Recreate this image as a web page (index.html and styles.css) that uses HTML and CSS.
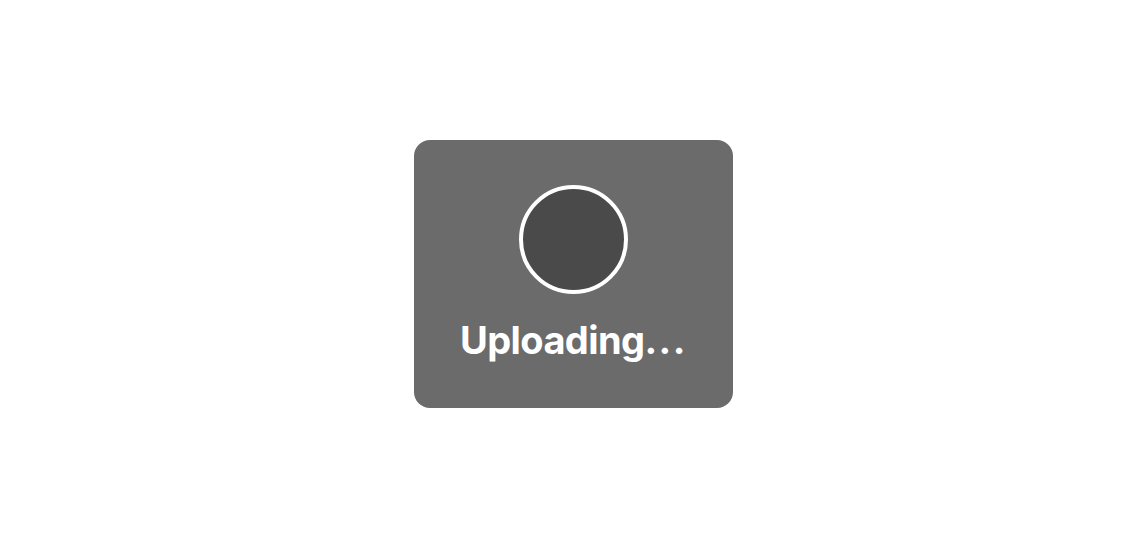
FILE: index.html
```html
<!DOCTYPE html>
<html lang="en">
<head>
<meta charset="utf-8">
<title>Uploading</title>
<link rel="stylesheet" href="styles.css">
</head>
<body>
<main class="stage">
  <div class="toast">
    <div class="spinner"></div>
    <div class="label">Uploading<span class="dots">...</span></div>
  </div>
</main>
</body>
</html>
```
FILE: styles.css
```css
html, body {
  margin: 0;
  padding: 0;
  background: #ffffff;
}
.stage {
  box-sizing: border-box;
  width: 1138px;
  height: 534px;
  padding: 140px 0 0 414px;
}
.toast {
  box-sizing: border-box;
  width: 319px;
  height: 268px;
  background: #6b6b6b;
  border-radius: 16px;
  display: flex;
  flex-direction: column;
  align-items: center;
  padding-top: 45px;
}
.spinner {
  box-sizing: border-box;
  width: 109px;
  height: 109px;
  border-radius: 50%;
  background: #4a4a4a;
  border: 4px solid #ffffff;
}
.label {
  margin-top: 22px;
  font-family: Inter, "Noto Sans", sans-serif;
  font-weight: 700;
  font-size: 38px;
  line-height: 48px;
  color: #ffffff;
  letter-spacing: -0.6px;
  font-feature-settings: "calt" 0;
}
.dots {
  letter-spacing: 1.5px;
}
```
